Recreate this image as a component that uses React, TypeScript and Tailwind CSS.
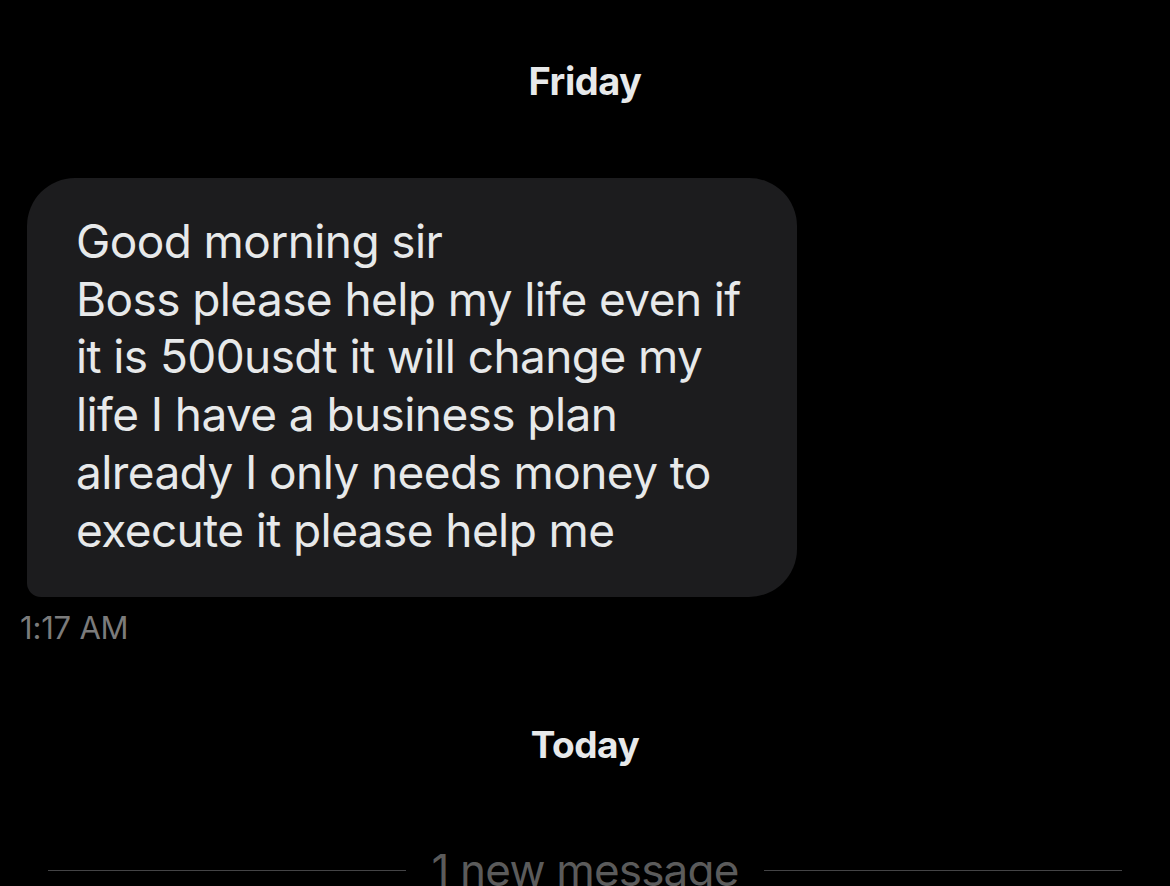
const font = { fontFamily: "Inter, 'Noto Sans', sans-serif" };

export default function App() {
  return (
    <div className="w-[1170px] h-[886px] bg-black overflow-hidden flex flex-col" style={font}>
      <div className="mx-[72px] h-[3px] bg-[#3a3a3c]" />

      <div className="mt-[62px] text-center text-[38px] leading-[38px] font-bold text-[#e7e9ea] tracking-[-0.5px]">
        Friday
      </div>

      <div className="mt-[78px] ml-[27px] w-[770px] bg-[#1c1c1e] rounded-[48px] rounded-bl-[14px] pl-[49px] pr-[30px] pt-[35px] pb-[38px]">
        <p className="text-[46px] leading-[57.7px] text-[#e7e9ea] tracking-[-0.6px]">
          Good morning sir
          <br />
          Boss please help my life even if it is 500usdt it will change my life I have a business plan already I only needs money to execute it please help me
        </p>
      </div>

      <div className="mt-[15px] ml-[20px] text-[31px] leading-[31px] text-[#7b7b7b] tracking-[-0.2px]">
        1:17 AM
      </div>

      <div className="mt-[83px] text-center text-[37px] leading-[37px] font-bold text-[#e7e9ea] tracking-[-0.5px]">
        Today
      </div>

      <div className="mt-[85px] flex items-center px-[48px]">
        <div className="flex-1 h-[1px] bg-[#444446]" />
        <span className="px-[25px] text-[44px] leading-[44px] text-[#5b5b5b] tracking-[-0.8px]">1 new message</span>
        <div className="flex-1 h-[1px] bg-[#444446]" />
      </div>
    </div>
  );
}
